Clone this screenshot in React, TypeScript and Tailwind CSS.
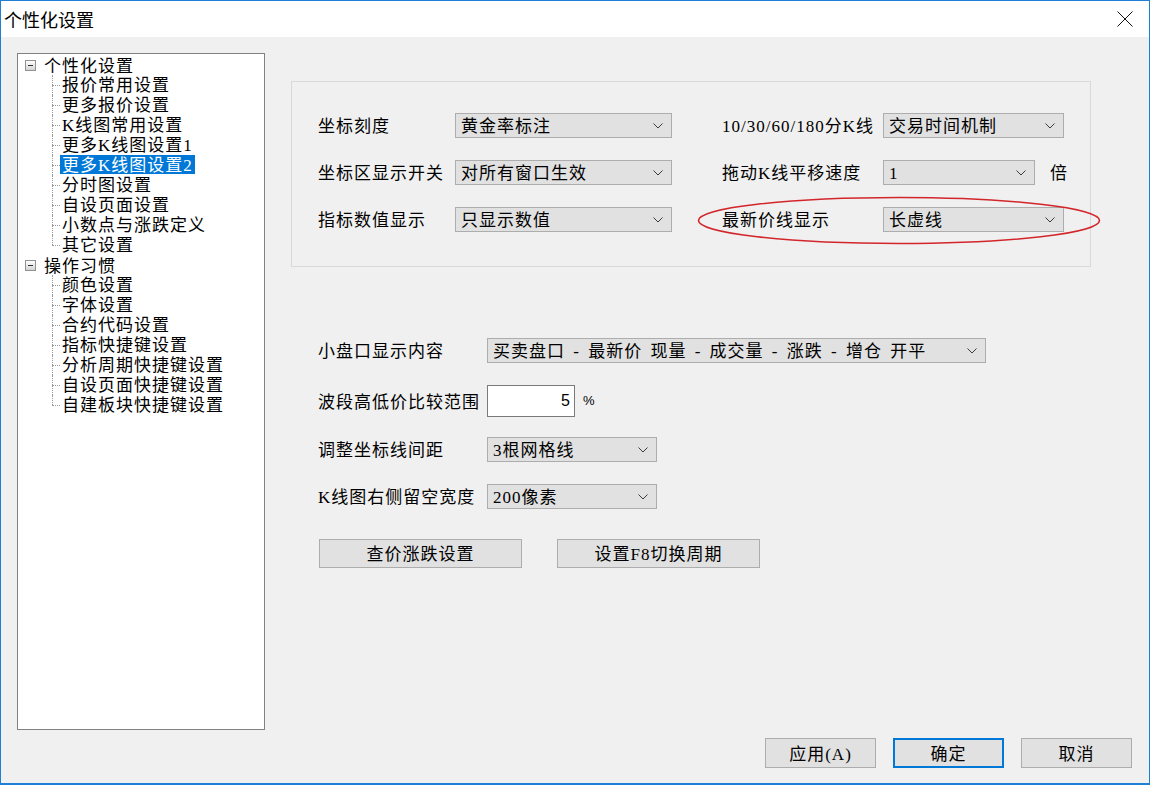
import React from "react";

const font = "font-['Liberation_Serif','Noto_Sans_CJK_SC',serif] text-[17px] tracking-[1px] leading-[20px] text-black";

// Noto CJK glyphs sit a little high in the line box; nudge text down
const T = ({ children, className = "" }: { children: React.ReactNode; className?: string }) => (
    <span className={`pt-[3px] whitespace-nowrap ${className}`}>{children}</span>
);

const Chevron = () => (
    <svg width="10" height="6" viewBox="0 0 10 6" className="shrink-0">
        <path d="M0.5 0.5 L5 5 L9.5 0.5" fill="none" stroke="#3c3c3c" strokeWidth="1" />
    </svg>
);

const Select = ({ value, width, className = "" }: { value: string; width: string; className?: string }) => (
    <div className={`${width} h-[25px] bg-[#e1e1e1] border border-[#adadad] flex items-center justify-between pl-[5px] pr-[8px]`}>
        <T className={className}>{value}</T>
        <Chevron />
    </div>
);

const Btn = ({ label, width, primary }: { label: string; width: string; primary?: boolean }) => (
    <div
        className={`${width} h-[30px] bg-[#e1e1e1] flex items-center justify-center ${
            primary ? "border-2 border-[#0078d7]" : "border border-[#adadad]"
        }`}
    >
        <T>{label}</T>
    </div>
);

const Toggle = () => (
    <div className="ml-[7px] w-[11px] h-[11px] border border-[#919191] bg-gradient-to-b from-white to-[#d4d4d4] flex items-center justify-center">
        <div className="w-[5px] h-px bg-[#333]" />
    </div>
);

const RootNode = ({ label }: { label: string }) => (
    <div className="flex h-[20px] items-center">
        <Toggle />
        <T className="ml-[8px]">{label}</T>
    </div>
);

const ChildNode = ({ label, last, selected }: { label: string; last?: boolean; selected?: boolean }) => (
    <div className="flex h-[20px]">
        <div className="ml-[34px] w-[8px] flex flex-col">
            <div className="h-[10px] border-l border-dotted border-[#9a9a9a]" />
            <div
                className={`h-[10px] border-t border-dotted border-[#9a9a9a] ${last ? "" : "border-l"}`}
            />
        </div>
        <span
            className={`px-[2px] pt-[2px] h-[19px] leading-[18px] whitespace-nowrap ${
                selected ? "bg-[#0078d7] text-white" : ""
            }`}
        >
            {label}
        </span>
    </div>
);

const groupA = ["报价常用设置", "更多报价设置", "K线图常用设置", "更多K线图设置1", "更多K线图设置2", "分时图设置", "自设页面设置", "小数点与涨跌定义", "其它设置"];
const groupB = ["颜色设置", "字体设置", "合约代码设置", "指标快捷键设置", "分析周期快捷键设置", "自设页面快捷键设置", "自建板块快捷键设置"];

const App = () => {
    return (
        <div className={`w-[1150px] h-[785px] border border-b-2 border-[#1f7fd4] bg-[#f0f0f0] flex flex-col overflow-hidden ${font}`}>
            {/* title bar */}
            <div className="h-[36px] bg-white flex items-center justify-between pl-[3px] pr-[16px] shrink-0">
                <span className="font-['Noto_Sans_CJK_SC',sans-serif] text-[18px] tracking-normal">个性化设置</span>
                <svg width="16" height="16" viewBox="0 0 16 16">
                    <path d="M0.5 0.5 L15.5 15.5 M15.5 0.5 L0.5 15.5" stroke="#111" strokeWidth="1" />
                </svg>
            </div>

            <div className="flex flex-col flex-1">
                <div className="flex items-start">
                    {/* tree */}
                    <div className="ml-[16px] mt-[16px] w-[248px] h-[677px] bg-white border border-[#828282] pt-[1px] shrink-0">
                        <RootNode label="个性化设置" />
                        {groupA.map((g, i) => (
                            <ChildNode key={g} label={g} last={i === groupA.length - 1} selected={g === "更多K线图设置2"} />
                        ))}
                        <RootNode label="操作习惯" />
                        {groupB.map((g, i) => (
                            <ChildNode key={g} label={g} last={i === groupB.length - 1} />
                        ))}
                    </div>

                    {/* settings */}
                    <div className="ml-[26px] pt-[44px] flex flex-col">
                        <div className="relative w-[800px] h-[186px] border border-[#d9d9d9] pl-[26px] pt-[31px] flex flex-col gap-[22px]">
                            <div className="flex items-center h-[25px]">
                                <T className="w-[137px]">坐标刻度</T>
                                <Select value="黄金率标注" width="w-[217px]" />
                                <T className="ml-[50px] w-[161px]">10/30/60/180分K线</T>
                                <Select value="交易时间机制" width="w-[181px]" />
                            </div>
                            <div className="flex items-center h-[25px]">
                                <T className="w-[137px]">坐标区显示开关</T>
                                <Select value="对所有窗口生效" width="w-[217px]" />
                                <T className="ml-[50px] w-[161px]">拖动K线平移速度</T>
                                <Select value="1" width="w-[152px]" />
                                <T className="ml-[15px]">倍</T>
                            </div>
                            <div className="flex items-center h-[25px]">
                                <T className="w-[137px]">指标数值显示</T>
                                <Select value="只显示数值" width="w-[217px]" />
                                <T className="ml-[50px] w-[161px]">最新价线显示</T>
                                <Select value="长虚线" width="w-[181px]" />
                            </div>
                            {/* annotation */}
                            <svg className="absolute left-[405px] top-[114px]" width="404" height="49" viewBox="0 0 404 49">
                                <ellipse cx="202" cy="24.5" rx="200.5" ry="23" fill="none" stroke="#d3262b" strokeWidth="1.6" />
                            </svg>
                        </div>

                        <div className="mt-[71px] pl-[27px] flex flex-col">
                            <div className="flex items-center h-[25px]">
                                <T className="w-[169px]">小盘口显示内容</T>
                                <Select
                                    value="买卖盘口 - 最新价 现量 - 成交量 - 涨跌 - 增仓 开平"
                                    width="w-[499px]"
                                    className="[word-spacing:3px]"
                                />
                            </div>
                            <div className="mt-[22px] flex items-center h-[32px]">
                                <T className="w-[169px]">波段高低价比较范围</T>
                                <div className="w-[88px] h-[32px] bg-white border border-[#7a7a7a] flex items-center justify-end pr-[4px] font-['Liberation_Sans',sans-serif] text-[16px] tracking-normal">
                                    5
                                </div>
                                <span className="ml-[8px] font-['Liberation_Sans',sans-serif] text-[13px] tracking-normal">%</span>
                            </div>
                            <div className="mt-[20px] flex items-center h-[25px]">
                                <T className="w-[169px]">调整坐标线间距</T>
                                <Select value="3根网格线" width="w-[170px]" />
                            </div>
                            <div className="mt-[22px] flex items-center h-[25px]">
                                <T className="w-[169px]">K线图右侧留空宽度</T>
                                <Select value="200像素" width="w-[170px]" />
                            </div>
                            <div className="mt-[30px] ml-[1px] flex gap-[35px]">
                                <div className="w-[203px] h-[29px] bg-[#e1e1e1] border border-[#adadad] flex items-center justify-center">
                                    <T>查价涨跌设置</T>
                                </div>
                                <div className="w-[203px] h-[29px] bg-[#e1e1e1] border border-[#adadad] flex items-center justify-center">
                                    <T>设置F8切换周期</T>
                                </div>
                            </div>
                        </div>
                    </div>
                </div>

                {/* footer */}
                <div className="mt-[8px] flex justify-end gap-[17px] pr-[17px]">
                    <Btn label="应用(A)" width="w-[111px]" />
                    <Btn label="确定" width="w-[111px]" primary />
                    <Btn label="取消" width="w-[111px]" />
                </div>
            </div>
        </div>
    );
};

export default App;
